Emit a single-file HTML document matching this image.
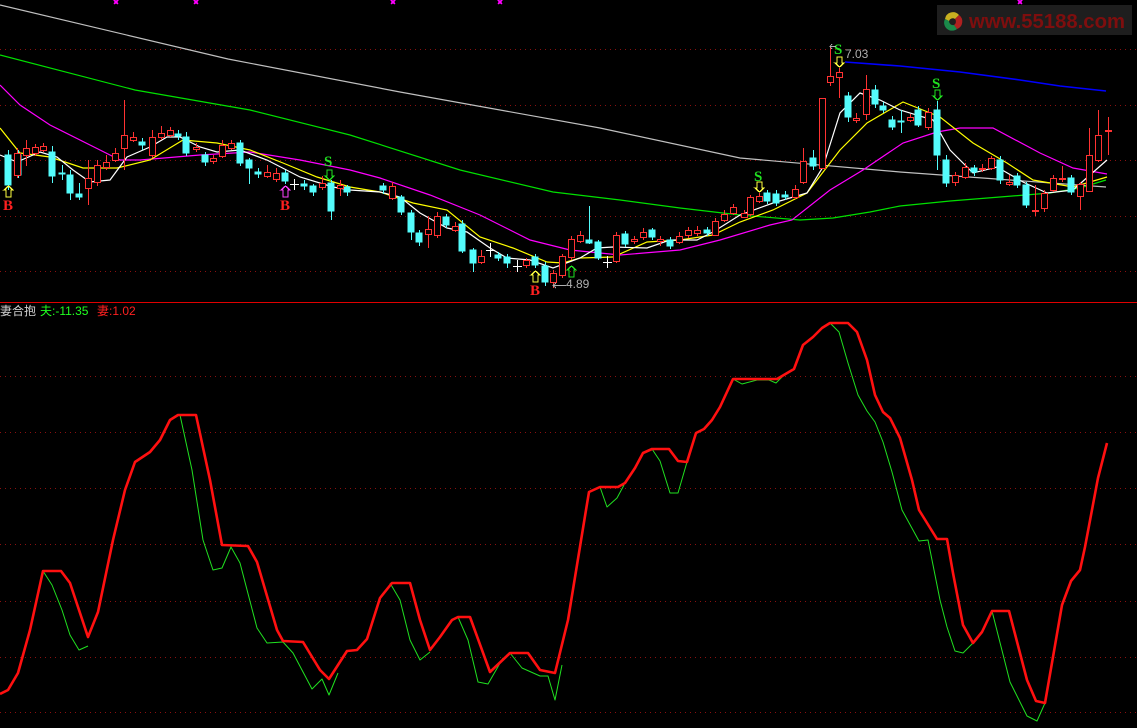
<!DOCTYPE html>
<html><head><meta charset="utf-8"><style>
html,body{margin:0;padding:0;background:#000;width:1137px;height:728px;overflow:hidden}
svg{display:block}
.c{fill:#54fcfc;stroke:#54fcfc}
.r{fill:#000;stroke:#ff3232}
.w{stroke:#54fcfc}
.rw{stroke:#ff3232}
text{font-family:"Liberation Sans","Noto Sans CJK SC",sans-serif}
text.sig{font-family:"Liberation Serif",serif;font-weight:bold;font-size:15px}
</style></head><body>
<svg width="1137" height="728" viewBox="0 0 1137 728" xmlns="http://www.w3.org/2000/svg" shape-rendering="crispEdges">
<g stroke="#8a1010" stroke-dasharray="1,4" stroke-width="1">
<path d="M0 49.5H1137M0 105.5H1137M0 160.5H1137M0 216.5H1137M0 271.5H1137"/>
<path d="M0 376.5H1137M0 432.5H1137M0 488.5H1137M0 544.5H1137M0 601.5H1137M0 657.5H1137M0 712.5H1137"/>
</g>
<path d="M0 302.5H1137" stroke="#e00000" stroke-width="1"/>

<!-- logo -->
<rect x="937" y="5" width="195" height="30" fill="#1e1e1e"/>
<g transform="translate(953,21)" shape-rendering="auto">
<path d="M-8 -2 A8 8 0 0 1 6 -6 L2 -2 A4 4 0 0 0 -4 0 Z" fill="#c8b020"/>
<path d="M6 -6 A8 8 0 0 1 4 8 L1 4 A4 4 0 0 0 2 -2 Z" fill="#b02020"/>
<path d="M4 8 A8 8 0 0 1 -8 -2 L-4 0 A4 4 0 0 0 1 4 Z" fill="#1a8a4a"/>
</g>
<text x="969" y="28" font-size="20" font-weight="bold" fill="#7e0e0e" textLength="156" lengthAdjust="spacingAndGlyphs">www.55188.com</text>

<!-- magenta x marks -->
<g stroke="#ff00ff" stroke-width="1.5">
<path d="M114 0l4 4M118 0l-4 4M194 0l4 4M198 0l-4 4M391 0l4 4M395 0l-4 4M498 0l4 4M502 0l-4 4M1018 0l4 4M1022 0l-4 4"/>
</g>

<g fill="none" stroke-width="1.2" shape-rendering="auto">
<polyline stroke="#c0c0c0" points="0,5 228,59 400,92 600,128 740,158 900,172 1106,187"/>
<polyline stroke="#0000ff" stroke-width="1.6" points="845,62 900,66 960,72 1020,80 1060,86 1106,91"/>
<polyline stroke="#00e000" points="0,55 135,90 250,110 350,135 460,170 553,192 620,200 680,208 740,215 800,220 833,218 870,212 900,206 950,201 1000,197 1050,193 1080,188 1106,180"/>
<polyline stroke="#ff00ff" points="0,85 20,105 50,125 100,150 120,160 140,160 200,155 250,152 300,160 350,170 380,178 430,195 480,215 530,240 570,250 620,255 680,250 720,240 770,225 792,220 830,190 863,170 903,143 937,132 960,128 993,128 1040,153 1073,168 1107,174"/>
<polyline stroke="#ffff00" points="0,128 20,153 50,157 83,168 117,168 150,160 183,140 217,143 250,150 283,163 317,177 350,187 380,192 413,203 447,210 480,237 513,248 547,262 563,263 580,258 613,257 647,242 680,240 713,235 740,222 773,210 807,193 840,150 867,123 903,102 940,117 973,143 1007,163 1033,180 1073,187 1107,177"/>
<polyline stroke="#ffffff" points="0,155 17,162 40,152 57,157 73,170 90,182 110,180 127,157 150,147 167,137 180,137 200,147 217,152 240,150 267,160 300,177 333,187 350,190 380,192 400,197 420,213 447,228 467,232 490,248 507,258 530,260 553,268 580,258 597,248 613,247 647,248 670,240 697,240 713,232 740,215 773,203 807,193 823,167 840,113 860,93 880,100 900,110 933,120 950,150 973,173 997,167 1023,182 1047,193 1073,190 1107,160"/>
</g>

<!-- candles -->
<g stroke-width="1">
<path class="w" d="M8.5 150V190M18.5 150V178M52.5 146V183M62.5 165V180M70.5 170V200M79.5 183V200M142.5 138V150M178.5 130V140M186.5 132V156M205.5 152V166M240.5 140V166M249.5 158V184M258.5 168V178M285.5 170V184M304.5 180V190M313.5 184V196M331.5 180V220M347.5 185V196M383.5 183V194M401.5 195V215M411.5 210V240M419.5 230V246M446.5 214V228M462.5 220V253M473.5 248V272M498.5 252V261M507.5 254V268M535.5 254V268M545.5 262V286M589.5 206V244M598.5 240V260M625.5 231V247M652.5 228V240M670.5 237V249M707.5 227V236M767.5 190V204M776.5 190V206M785.5 191V200M813.5 150V170M848.5 92V122M875.5 85V108M883.5 102V113M892.5 116V130M901.5 110V133M918.5 106V127M937.5 101V170M946.5 155V187M974.5 165V176M1000.5 156V184M1017.5 173V188M1026.5 182V208M1071.5 175V195"/>
<path class="rw" d="M17.5 148V178M26.5 140V166M35.5 144V156M43.5 143V152M88.5 160V205M97.5 160V186M106.5 155V170M115.5 148V162M124.5 100V170M133.5 132V142M152.5 130V158M161.5 126V140M170.5 127V137M196.5 143V152M213.5 155V164M222.5 140V158M231.5 140V150M267.5 165V178M276.5 168V182M322.5 176V190M340.5 180V196M392.5 182V200M428.5 216V248M437.5 212V238M455.5 222V232M481.5 250V264M526.5 258V268M553.5 270V288M562.5 254V278M571.5 236V260M580.5 231V243M616.5 232V263M634.5 236V244M643.5 228V240M660.5 236V246M679.5 232V244M688.5 227V238M697.5 226V236M715.5 218V236M724.5 210V222M733.5 204V215M744.5 210V218M750.5 195V216M759.5 193V203M795.5 185V199M803.5 148V184M822.5 98V168M830.5 46V86M839.5 68V98M856.5 113V123M866.5 75V120M910.5 114V122M928.5 108V130M955.5 172V186M965.5 163V179M982.5 164V172M991.5 156V170M1009.5 175V186M1035.5 185V216M1044.5 190V212M1053.5 175V192M1062.5 166V182M1080.5 182V210M1089.5 128V192M1098.5 110V162M1108.5 117V155"/>
<g class="c">
<rect x="5" y="155" width="6" height="30"/><rect x="15" y="155" width="6" height="20"/>
<rect x="49" y="152" width="6" height="24"/><rect x="59" y="173" width="6" height="1"/>
<rect x="67" y="175" width="6" height="18"/><rect x="76" y="194" width="6" height="3"/>
<rect x="139" y="142" width="6" height="3"/><rect x="175" y="134" width="6" height="2"/>
<rect x="183" y="137" width="6" height="16"/><rect x="202" y="155" width="6" height="7"/>
<rect x="237" y="143" width="6" height="20"/><rect x="246" y="160" width="6" height="8"/>
<rect x="255" y="172" width="6" height="2"/><rect x="282" y="173" width="6" height="8"/>
<rect x="301" y="184" width="6" height="2"/><rect x="310" y="186" width="6" height="6"/>
<rect x="328" y="183" width="6" height="28"/><rect x="344" y="187" width="6" height="5"/>
<rect x="380" y="186" width="6" height="4"/><rect x="398" y="197" width="6" height="15"/>
<rect x="408" y="213" width="6" height="19"/><rect x="416" y="233" width="6" height="9"/>
<rect x="443" y="217" width="6" height="8"/><rect x="459" y="224" width="6" height="27"/>
<rect x="470" y="250" width="6" height="13"/><rect x="495" y="255" width="6" height="3"/>
<rect x="504" y="257" width="6" height="6"/><rect x="532" y="257" width="6" height="8"/>
<rect x="542" y="266" width="6" height="16"/><rect x="586" y="240" width="6" height="3"/>
<rect x="595" y="242" width="6" height="16"/><rect x="622" y="234" width="6" height="10"/>
<rect x="649" y="230" width="6" height="7"/><rect x="667" y="240" width="6" height="6"/>
<rect x="704" y="230" width="6" height="3"/><rect x="764" y="193" width="6" height="8"/>
<rect x="773" y="194" width="6" height="9"/><rect x="782" y="195" width="6" height="2"/>
<rect x="810" y="158" width="6" height="8"/><rect x="845" y="96" width="6" height="21"/>
<rect x="872" y="90" width="6" height="14"/><rect x="880" y="106" width="6" height="4"/>
<rect x="889" y="120" width="6" height="7"/><rect x="898" y="121" width="6" height="1"/>
<rect x="915" y="110" width="6" height="15"/><rect x="934" y="110" width="6" height="45"/>
<rect x="943" y="160" width="6" height="23"/><rect x="971" y="168" width="6" height="4"/>
<rect x="997" y="160" width="6" height="20"/><rect x="1014" y="176" width="6" height="9"/>
<rect x="1023" y="185" width="6" height="20"/><rect x="1068" y="178" width="6" height="14"/>
</g>
<g class="r">
<rect x="14.5" y="153.5" width="6" height="22"/><rect x="23.5" y="148.5" width="6" height="7"/>
<rect x="32.5" y="147.5" width="6" height="6"/><rect x="40.5" y="146.5" width="6" height="4"/>
<rect x="85.5" y="178.5" width="6" height="10"/><rect x="94.5" y="165.5" width="6" height="17"/>
<rect x="103.5" y="162.5" width="6" height="5"/><rect x="112.5" y="153.5" width="6" height="7"/>
<rect x="121.5" y="135.5" width="6" height="13"/><rect x="130.5" y="137.5" width="6" height="3"/>
<rect x="149.5" y="137.5" width="6" height="18"/><rect x="158.5" y="133.5" width="6" height="4"/>
<rect x="167.5" y="130.5" width="6" height="5"/><rect x="193.5" y="147.5" width="6" height="2"/>
<rect x="210.5" y="158.5" width="6" height="3"/><rect x="219.5" y="145.5" width="6" height="11"/>
<rect x="228.5" y="143.5" width="6" height="5"/><rect x="264.5" y="172.5" width="6" height="4"/>
<rect x="273.5" y="173.5" width="6" height="6"/><rect x="319.5" y="183.5" width="6" height="4"/>
<rect x="337.5" y="185.5" width="6" height="3"/><rect x="389.5" y="186.5" width="6" height="12"/>
<rect x="425.5" y="229.5" width="6" height="5"/><rect x="434.5" y="216.5" width="6" height="19"/>
<rect x="452.5" y="226.5" width="6" height="4"/><rect x="478.5" y="256.5" width="6" height="6"/>
<rect x="523.5" y="260.5" width="6" height="5"/><rect x="550.5" y="273.5" width="6" height="9"/>
<rect x="559.5" y="256.5" width="6" height="19"/><rect x="568.5" y="239.5" width="6" height="18"/>
<rect x="577.5" y="235.5" width="6" height="6"/><rect x="613.5" y="235.5" width="6" height="26"/>
<rect x="631.5" y="239.5" width="6" height="2"/><rect x="640.5" y="232.5" width="6" height="5"/>
<rect x="657.5" y="239.5" width="6" height="2"/><rect x="676.5" y="236.5" width="6" height="6"/>
<rect x="685.5" y="230.5" width="6" height="5"/><rect x="694.5" y="230.5" width="6" height="3"/>
<rect x="712.5" y="221.5" width="6" height="14"/><rect x="721.5" y="214.5" width="6" height="6"/>
<rect x="730.5" y="207.5" width="6" height="6"/><rect x="741.5" y="213.5" width="6" height="4"/>
<rect x="747.5" y="197.5" width="6" height="17"/><rect x="756.5" y="196.5" width="6" height="5"/>
<rect x="792.5" y="189.5" width="6" height="8"/><rect x="800.5" y="161.5" width="6" height="21"/>
<rect x="819.5" y="98.5" width="6" height="70"/><rect x="827.5" y="76.5" width="6" height="6"/>
<rect x="836.5" y="72.5" width="6" height="5"/><rect x="853.5" y="118.5" width="6" height="2"/>
<rect x="863.5" y="89.5" width="6" height="25"/><rect x="907.5" y="117.5" width="6" height="3"/>
<rect x="925.5" y="112.5" width="6" height="15"/><rect x="952.5" y="175.5" width="6" height="7"/>
<rect x="962.5" y="167.5" width="6" height="10"/><rect x="979.5" y="168.5" width="6" height="1"/>
<rect x="988.5" y="158.5" width="6" height="10"/><rect x="1006.5" y="182.5" width="6" height="2"/>
<rect x="1032.5" y="210.5" width="6" height="1"/><rect x="1041.5" y="193.5" width="6" height="15"/>
<rect x="1050.5" y="178.5" width="6" height="12"/><rect x="1059.5" y="178.5" width="6" height="1"/>
<rect x="1077.5" y="184.5" width="6" height="12"/><rect x="1086.5" y="155.5" width="6" height="36"/>
<rect x="1095.5" y="135.5" width="6" height="25"/><rect x="1105.5" y="130.5" width="6" height="1"/>
</g>
<path stroke="#fff" d="M294.5 179V190M290 184.5H299M490.5 243V257M486 250.5H495M517.5 260V272M513 266.5H522M607.5 256V268M603 262.5H612"/>
</g>

<!-- signals -->
<text class="sig" x="3" y="210" fill="#ff2020">B</text>
<text class="sig" x="280" y="210" fill="#ff2020">B</text>
<text class="sig" x="530" y="295" fill="#ff2020">B</text>
<text class="sig" x="324" y="166" fill="#20e020">S</text>
<text class="sig" x="754" y="181" fill="#20e020">S</text>
<text class="sig" x="834" y="54" fill="#20e020">S</text>
<text class="sig" x="932" y="88" fill="#20e020">S</text>
<g stroke-width="1.3" fill="none">
<path d="M6 197V190H4L8.5 186L13 190H11V197Z" stroke="#ffff40"/>
<path d="M283 197V190H281L285.5 186L290 190H288V197Z" stroke="#ff40ff"/>
<path d="M533 282V275H531L535.5 271L540 275H538V282Z" stroke="#ffff40"/>
<path d="M569 277V270H567L571.5 266L576 270H574V277Z" stroke="#20e020"/>
<path d="M327 170V176H325L329.5 180L334 176H332V170Z" stroke="#20e020"/>
<path d="M757 182V188H755L759.5 192L764 188H762V182Z" stroke="#ffff40"/>
<path d="M837 57V63H835L839.5 67L844 63H842V57Z" stroke="#ffff40"/>
<path d="M935 90V96H933L937.5 100L942 96H940V90Z" stroke="#20e020"/>
</g>
<text x="566" y="288" font-size="12" fill="#b0b0b0">4.89</text>
<path d="M553 285.5H566M556 283l-3 2.5 3 2.5" stroke="#b0b0b0" fill="none"/>
<text x="845" y="58" font-size="12" fill="#b0b0b0">7.03</text>
<path d="M830 46.5H836M832 44l-2 2.5 2 2.5" stroke="#b0b0b0" fill="none"/>

<!-- lower panel label -->
<text x="0" y="315" font-size="12" fill="#d0d0d0">妻合抱</text>
<text x="40" y="315" font-size="12" fill="#20ff20">夫:-11.35</text>
<text x="97" y="315" font-size="12" fill="#ff2020">妻:1.02</text>

<g fill="none" shape-rendering="auto" stroke-linejoin="round">
<g stroke="#20e020" stroke-width="1">
<polyline points="43,571 52,585 62,610 70,635 79,650 88,646"/>
<polyline points="180,415 192,470 203,540 213,570 222,568 231,547 240,563 257,628 267,643 283,642 293,653 312,689 322,679 329,695 338,673"/>
<polyline points="390,583 400,600 410,640 420,660 430,652"/>
<polyline points="458,617 468,640 478,682 488,684 503,658"/>
<polyline points="510,653 522,668 540,676 548,676 555,700 562,665"/>
<polyline points="600,487 607,507 617,498 624,485"/>
<polyline points="652,449 660,461 670,493 678,493 687,462"/>
<polyline points="733,379 742,384 757,380 769,380 776,383 783,376"/>
<polyline points="830,323 839,332 848,363 858,395 867,411 875,422 883,442 892,472 902,510 919,541 928,540 940,600 947,627 955,651 963,653 973,643"/>
<polyline points="992,611 1010,682 1027,716 1037,721 1045,703"/>
</g>
<polyline stroke="#ff1010" stroke-width="2.6" points="0,694 8,690 18,673 30,630 43,571 61,571 70,583 88,637 98,612 113,540 125,490 135,462 150,452 160,440 170,420 178,415 196,415 210,480 222,545 248,546 257,562 277,630 283,641 303,642 320,670 329,679 347,651 357,650 367,639 380,598 392,583 410,583 420,620 430,650 440,637 452,620 458,617 470,617 490,672 510,653 528,653 540,670 555,673 568,620 586,510 589,492 600,487 618,487 625,483 635,468 643,453 652,449 669,449 678,461 687,462 696,433 704,429 712,420 720,407 733,379 777,379 794,369 803,345 813,337 822,328 830,323 848,323 857,332 867,360 875,395 883,412 890,418 900,438 912,480 919,510 937,539 947,539 953,573 963,625 973,643 982,632 992,611 1009,611 1027,680 1036,701 1045,703 1053,657 1062,605 1071,581 1080,570 1085,547 1098,478 1107,443"/>
</g>
</svg>
</body></html>
